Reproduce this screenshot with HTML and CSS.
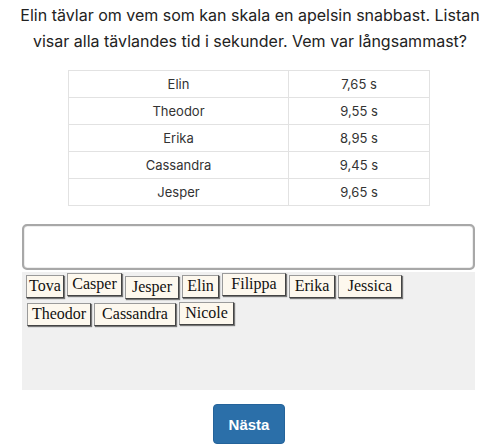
FILE: index.html
```html
<!DOCTYPE html>
<html>
<head>
  <title>Vem var långsammast?</title>
  <link rel="stylesheet" href="styles.css">
</head>
<body>
<div class="page">
  <p class="question">Elin tävlar om vem som kan skala en apelsin snabbast. Listan<br>visar alla tävlandes tid i sekunder. Vem var långsammast?</p>

  <table class="times" cellspacing="0">
    <tr><td class="name">Elin</td><td>7,65 s</td></tr>
    <tr><td class="name">Theodor</td><td>9,55 s</td></tr>
    <tr><td class="name">Erika</td><td>8,95 s</td></tr>
    <tr><td class="name">Cassandra</td><td>9,45 s</td></tr>
    <tr><td class="name">Jesper</td><td>9,65 s</td></tr>
  </table>

  <div class="answer"></div>

  <div class="pool">
    <span class="card" style="width:38px;top:0px">Tova</span>
    <span class="card" style="width:55px;top:-2px">Casper</span>
    <span class="card" style="width:54px;top:1px">Jesper</span>
    <span class="card" style="width:37px;top:0px">Elin</span>
    <span class="card" style="width:64px;top:-2px">Filippa</span>
    <span class="card" style="width:46px;top:0px">Erika</span>
    <span class="card" style="width:64px;top:0px">Jessica</span>
    <span class="row-break"></span>
    <span class="card" style="width:64px;top:1px;left:1px">Theodor</span>
    <span class="card" style="width:82px;top:1px;left:1px">Cassandra</span>
    <span class="card" style="width:55px;top:0px;left:1px">Nicole</span>
  </div>

  <div class="actions">
    <button class="next">Nästa</button>
  </div>
</div>
</body>
</html>
```

FILE: styles.css
```css
body{
  margin:0;
  font-family:Inter, "Noto Sans", sans-serif;
  background:#ffffff;
}

.page{
  width:500px;
}

.question{
  margin:0;
  padding:2px 0 0;
  font-size:16px;
  line-height:26px;
  color:#222222;
  text-align:center;
  white-space:nowrap;
}

.times{
  margin:16px 0 0 68px;
  width:362px;
  border-collapse:collapse;
  font-size:13px;
  color:#333333;
  text-align:center;
}

.times td{
  border:1px solid #e2e2e2;
  height:26px;
  padding:0;
}

.times .name{
  width:219px;
}

.answer{
  margin:18px 0 0 22px;
  width:449px;
  height:42px;
  border:2px solid #a8a8a8;
  border-radius:5px;
  box-shadow:inset 0 0 1px #555;
  background:#ffffff;
}

.pool{
  margin:2px 0 0 22px;
  width:453px;
  height:118px;
  box-sizing:border-box;
  padding:3px 4px;
  background:#f0f0f0;
  display:flex;
  flex-wrap:wrap;
  align-content:flex-start;
  column-gap:3px;
  row-gap:2px;
}

.row-break{
  flex-basis:100%;
  height:0;
}

.card{
  position:relative;
  display:inline-block;
  box-sizing:border-box;
  height:23px;
  border:1px solid #9a9a9a;
  border-right-color:#444;
  border-bottom-color:#444;
  box-shadow:1px 1px 1px #777;
  background:#fdf8ee;
  font-family:"Liberation Serif", serif;
  font-size:16px;
  line-height:20px;
  color:#111111;
  text-align:center;
}

.actions{
  display:flex;
  justify-content:center;
  padding-top:14px;
  padding-right:2px;
}

.next{
  width:72px;
  height:40px;
  border:1px solid #24639a;
  border-radius:4px;
  background:#2b6fa9;
  color:#ffffff;
  font-family:"Liberation Sans", Arial, sans-serif;
  font-weight:bold;
  font-size:15px;
}
```
